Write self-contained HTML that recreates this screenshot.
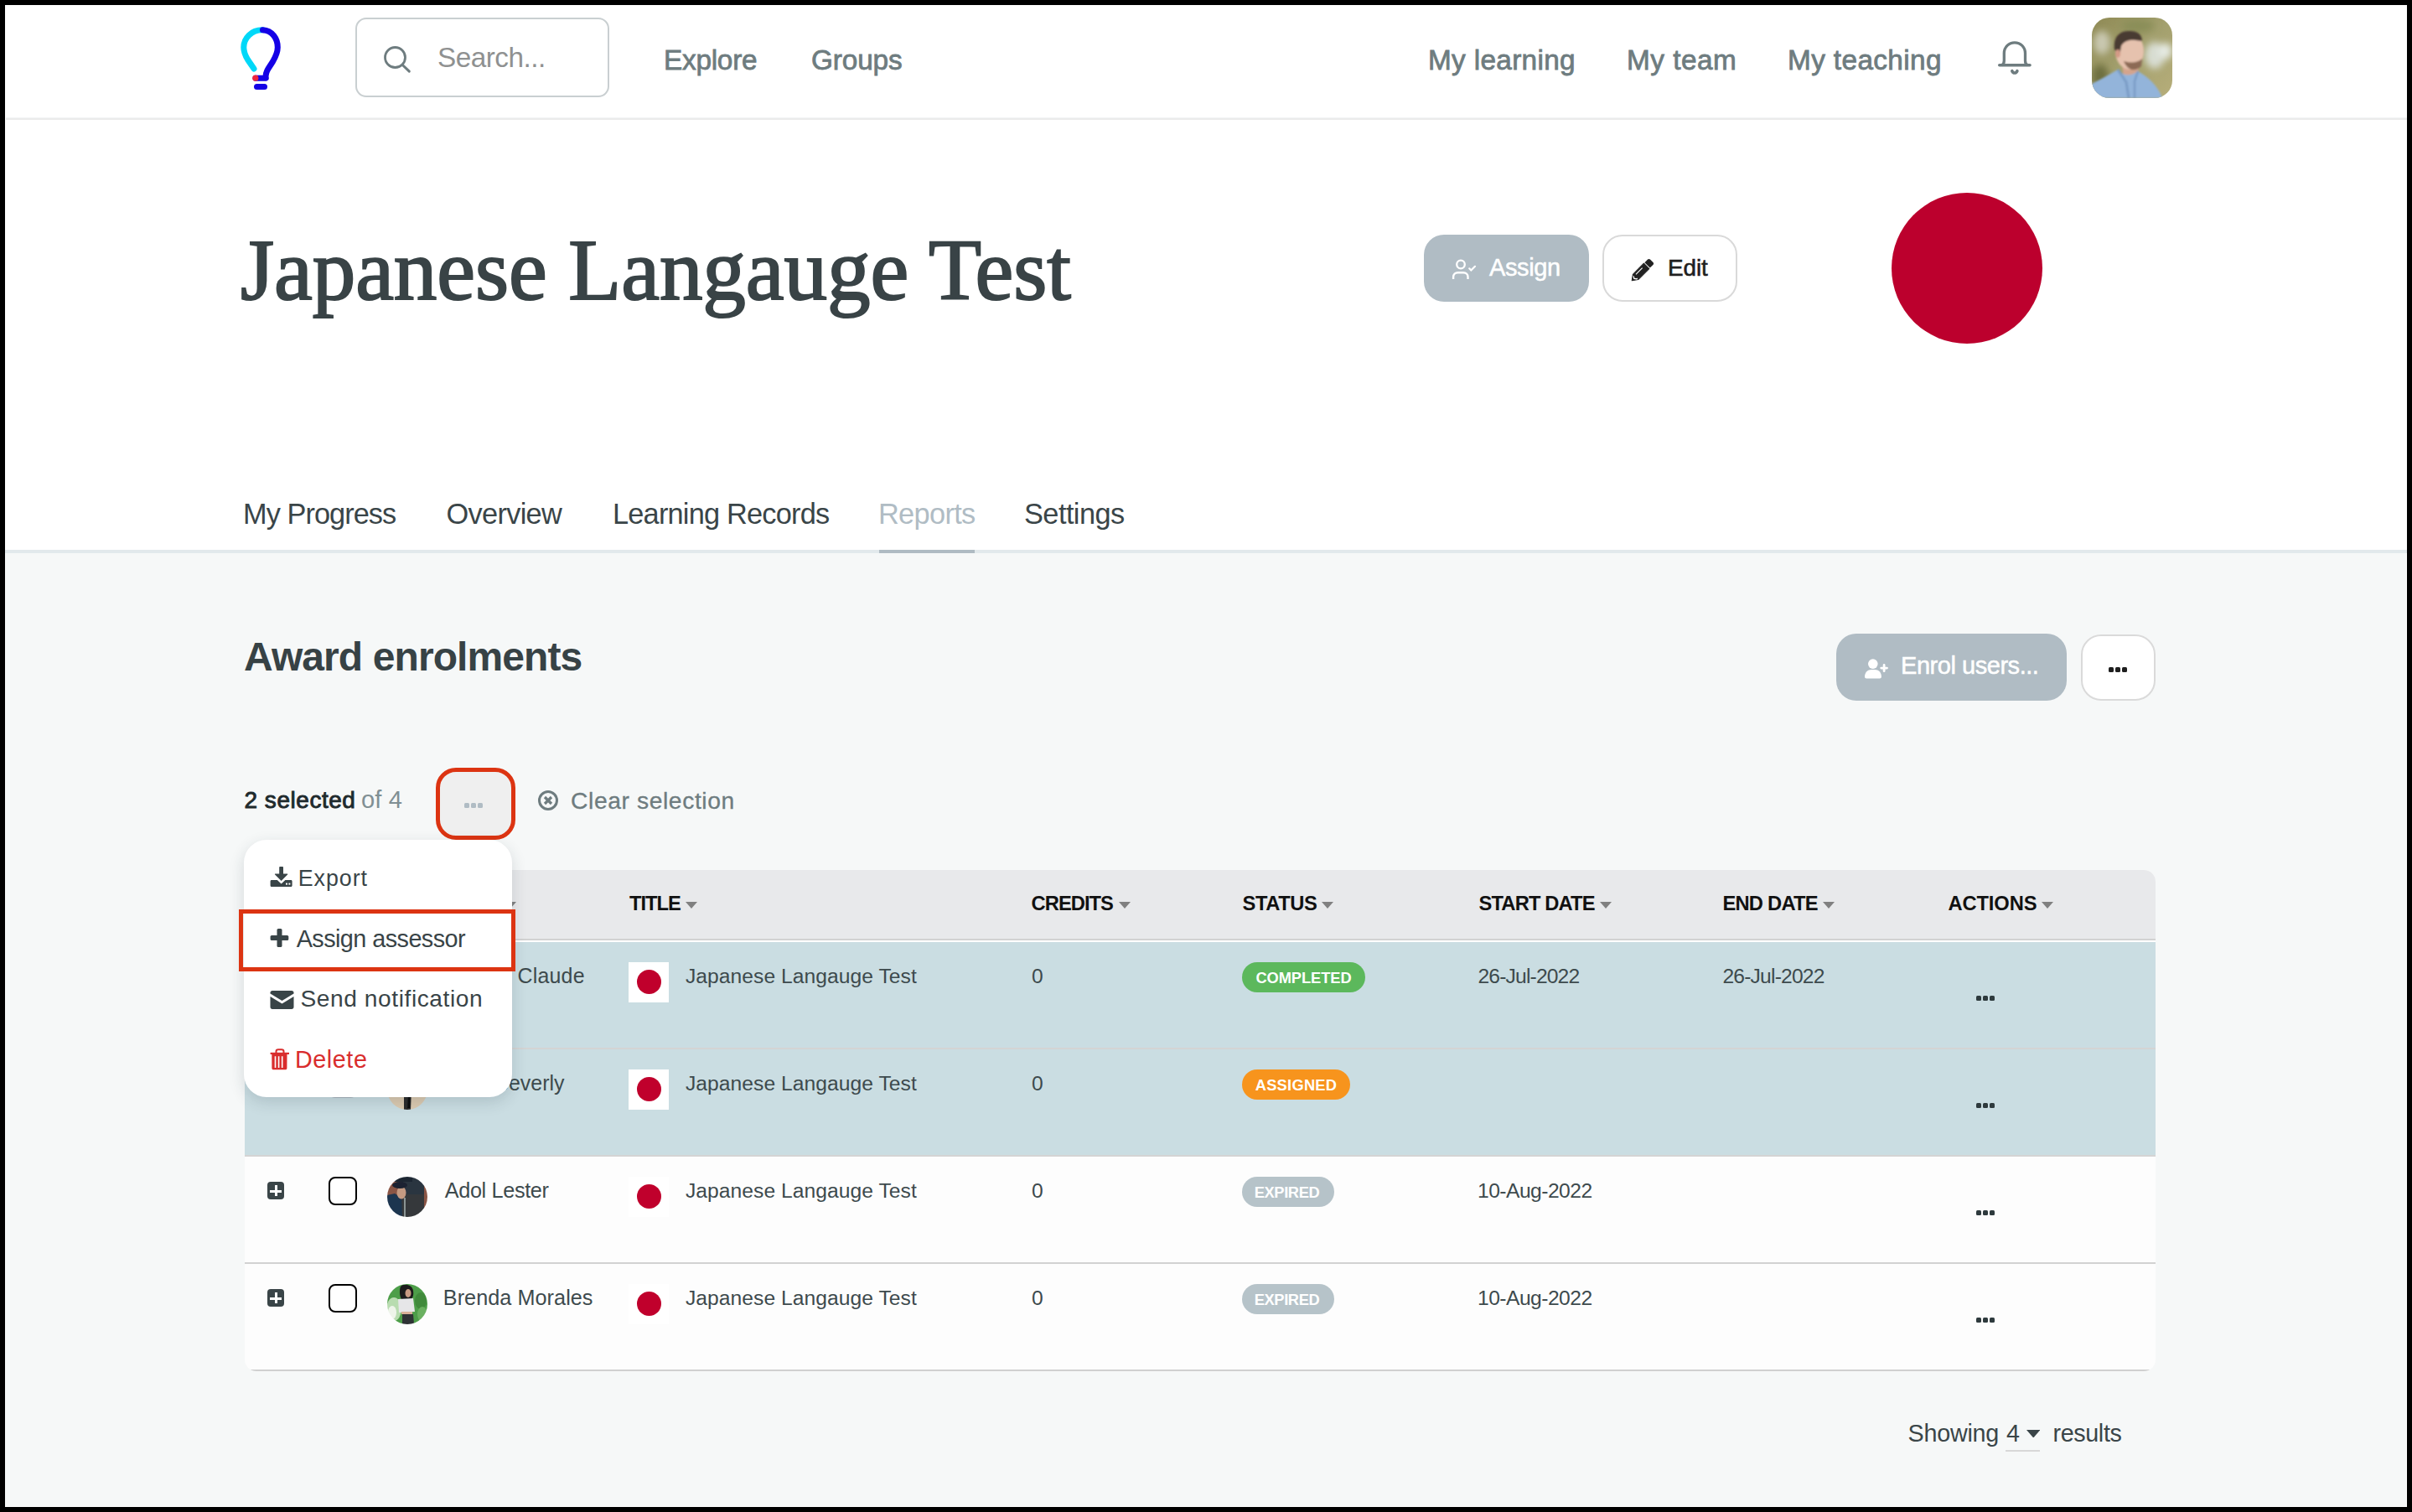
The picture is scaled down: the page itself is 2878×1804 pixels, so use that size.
<!DOCTYPE html>
<html><head><meta charset="utf-8">
<style>
html,body{margin:0;padding:0;}
body{width:2878px;height:1804px;background:#000;position:relative;overflow:hidden;font-family:"Liberation Sans",sans-serif;}
.a{position:absolute;box-sizing:border-box;}
.t{position:absolute;white-space:nowrap;}
</style></head><body>
<!-- frame -->
<div class="a" style="left:6px;top:6px;width:2866px;height:1792px;background:#fff;"></div>
<div class="a" style="left:6px;top:660px;width:2865px;height:1137px;background:#f6f8f8;"></div>
<!-- header line -->
<div class="a" style="left:7px;top:140px;width:2865px;height:1px;background:#f3f4f6;"></div>
<div class="a" style="left:7px;top:141px;width:2865px;height:2px;background:#ebebeb;"></div>

<!-- logo -->
<svg class="a" style="left:275px;top:25px" width="70" height="90" viewBox="0 0 70 90">
 <path d="M38.5 10.8 C25 10.5 15.8 20.5 15.8 31.5 C15.8 37 17.5 41 20.5 46 L28 57" fill="none" stroke="#00d8f8" stroke-width="7" stroke-linecap="round"/>
 <path d="M38.5 10.8 C50 11.5 56.3 21 56.3 31.5 C56.3 38 54 42.5 50.5 48.5 L45 57 C42.5 61 41.6 64 42.3 68.2 L30 68.2" fill="none" stroke="#1400e6" stroke-width="7" stroke-linecap="round" stroke-linejoin="round"/>
 <circle cx="29.8" cy="68.2" r="3.6" fill="#f0243c"/>
 <path d="M31.5 78.6 L40.5 78.6" stroke="#1400e6" stroke-width="7" stroke-linecap="round"/>
</svg>

<!-- search box -->
<div class="a" style="left:424px;top:21px;width:303px;height:95px;border:2px solid #c9cfd1;border-radius:13px;"></div>
<svg class="a" style="left:452px;top:50px" width="44" height="44" viewBox="0 0 44 44">
 <circle cx="19.5" cy="18.5" r="12" fill="none" stroke="#6e7c7f" stroke-width="2.8"/>
 <path d="M28.3 27.5 L36.3 35.2" stroke="#6e7c7f" stroke-width="3" stroke-linecap="round"/>
</svg>

<!-- bell -->
<svg class="a" style="left:2378px;top:44px" width="52" height="50" viewBox="0 0 52 50">
 <path d="M7.8 33.8 L44 33.8" stroke="#6e7c7f" stroke-width="3.6" stroke-linecap="round"/>
 <path d="M10.5 33.8 C12.8 32.6 13.3 31 13.3 28.5 L13.3 19.5 C13.3 12 19 6.8 25.9 6.8 C32.8 6.8 38.5 12 38.5 19.5 L38.5 28.5 C38.5 31 39 32.6 41.3 33.8" fill="none" stroke="#6e7c7f" stroke-width="3.3" stroke-linejoin="round"/>
 <path d="M22.8 40.7 C23.5 42.3 24.6 43 25.85 43 C27.1 43 28.2 42.3 28.9 40.7" fill="none" stroke="#6e7c7f" stroke-width="3.6" stroke-linecap="round"/>
</svg>

<!-- avatar header -->
<svg class="a" style="left:2496px;top:21px" width="96" height="96" viewBox="0 0 96 96">
 <defs><clipPath id="cah"><rect width="96" height="96" rx="21" ry="21"/></clipPath>
 <filter id="fbh"><feGaussianBlur stdDeviation="0.8"/></filter>
 <filter id="fbh2"><feGaussianBlur stdDeviation="4"/></filter>
 <linearGradient id="gbg" x1="0" y1="0" x2="1" y2="1"><stop offset="0" stop-color="#8f8a55"/><stop offset="0.5" stop-color="#a3a06e"/><stop offset="1" stop-color="#b7ae7a"/></linearGradient></defs>
 <g clip-path="url(#cah)">
  <rect width="96" height="96" fill="url(#gbg)"/>
  <g filter="url(#fbh2)">
   <ellipse cx="12" cy="30" rx="10" ry="14" fill="#c9c8b0"/>
   <ellipse cx="75" cy="45" rx="12" ry="16" fill="#d8ddd2"/>
   <ellipse cx="88" cy="40" rx="8" ry="10" fill="#e6ebe4"/>
   <ellipse cx="55" cy="10" rx="20" ry="8" fill="#8a8e58"/>
   <ellipse cx="10" cy="70" rx="10" ry="14" fill="#6e7040"/>
  </g>
  <g filter="url(#fbh)">
   <path d="M36 54 L56 54 L55 70 L38 74 Z" fill="#d4a48c"/>
   <ellipse cx="45" cy="40" rx="17" ry="22" fill="#e6c2ae"/>
   <path d="M27 38 C25 22 34 15 46 16 C54 16 60 20 60 28 L52 27 C45 26 38 28 35 34 L33 46 Z" fill="#4a3a30"/>
   <path d="M38 52 C42 62 50 66 59 58 L60 49 C53 55 45 54 38 52 Z" fill="#8c6a55"/>
   <ellipse cx="31" cy="43" rx="3" ry="5" fill="#d49a86"/>
   <path d="M0 79 C12 73 22 67 31 62 C36 68 44 72 55 64 C67 71 79 81 84 96 L0 96 Z" fill="#93b4da"/>
   <path d="M31 62 L41 77 L44 96" fill="none" stroke="#7a9cc6" stroke-width="3"/>
   <path d="M55 64 L51 76 L51 96" fill="none" stroke="#7a9cc6" stroke-width="2.5"/>
  </g>
 </g>
</svg>

<!-- title-area buttons -->
<div class="a" style="left:1699px;top:280px;width:197px;height:80px;background:#b0bcc4;border-radius:24px;"></div>
<svg class="a" style="left:1730px;top:306px" width="34" height="30" viewBox="0 0 34 30">
 <circle cx="13" cy="9.5" r="4.8" fill="none" stroke="#fff" stroke-width="2.3"/>
 <path d="M4.1 27 L4.1 24.5 C4.1 21.3 6.4 19.3 9.6 19.3 L16 19.3 C19.2 19.3 21.5 21.3 21.5 24.5 L21.5 27" fill="none" stroke="#fff" stroke-width="2.4"/>
 <path d="M23.2 14.3 L25.3 16.6 L30 11.8" fill="none" stroke="#fff" stroke-width="2.2" stroke-linecap="round" stroke-linejoin="round"/>
</svg>
<div class="a" style="left:1912px;top:280px;width:161px;height:80px;background:#fff;border:2px solid #d9d9d9;border-radius:24px;"></div>
<svg class="a" style="left:1944px;top:306px" width="32" height="32" viewBox="0 0 32 32">
 <g transform="translate(3.2 28.8) rotate(-45)">
  <path d="M0 0 L6.2 -4.5 L24.6 -4.5 L24.6 4.5 L6.2 4.5 Z" fill="#222" stroke="#222" stroke-width="1" stroke-linejoin="round"/>
  <path d="M26 -4.5 L31.2 -4.5 C32.4 -4.5 33.2 -3.7 33.2 -2.5 L33.2 2.5 C33.2 3.7 32.4 4.5 31.2 4.5 L26 4.5 Z" fill="#222"/>
  <path d="M8.6 -1.9 L19.5 -1.9" stroke="#fff" stroke-width="1.1"/>
  <path d="M5.2 -2.6 L3.6 0 L5.2 2.6 L6.6 2.6" fill="none" stroke="#fff" stroke-width="1.3" stroke-linejoin="round"/>
 </g>
</svg>
<div class="a" style="left:2257px;top:230px;width:180px;height:180px;border-radius:50%;background:#bc002d;"></div>

<!-- tabs line -->
<div class="a" style="left:6px;top:656px;width:2866px;height:4px;background:#e2e9ec;"></div>
<div class="a" style="left:1049px;top:656px;width:114px;height:4px;background:#afbbc3;"></div>

<!-- enrol buttons -->
<div class="a" style="left:2191px;top:756px;width:275px;height:80px;background:#b0bcc4;border-radius:24px;"></div>
<svg class="a" style="left:2222px;top:784px" width="34" height="30" viewBox="0 0 34 30">
 <circle cx="12.8" cy="8.1" r="5.8" fill="#fff"/>
 <path d="M3 23.5 C3 18.5 6.5 15.1 11 15.1 L15 15.1 C19.5 15.1 22.9 18.5 22.9 23.5 C22.9 24.6 22 25.5 20.9 25.5 L5 25.5 C3.9 25.5 3 24.6 3 23.5 Z" fill="#fff"/>
 <path d="M22.7 13.1 L29.5 13.1 M26.1 9.5 L26.1 16.7" stroke="#fff" stroke-width="2.8" stroke-linecap="round"/>
</svg>
<div class="a" style="left:2483px;top:757px;width:89px;height:79px;background:#fff;border:2px solid #dadada;border-radius:24px;"></div>
<div class="a" style="left:2516px;top:796px;width:6px;height:6px;background:#1e1e1e;border-radius:1.5px;"></div>
<div class="a" style="left:2524px;top:796px;width:6px;height:6px;background:#1e1e1e;border-radius:1.5px;"></div>
<div class="a" style="left:2532px;top:796px;width:6px;height:6px;background:#1e1e1e;border-radius:1.5px;"></div>

<!-- selection bar -->
<div class="a" style="left:520px;top:916px;width:95px;height:86px;background:#efefef;border:5px solid #dc3412;border-radius:24px;"></div>
<div class="a" style="left:554px;top:958px;width:6px;height:6px;background:#b0bcc4;border-radius:1.5px;"></div>
<div class="a" style="left:562px;top:958px;width:6px;height:6px;background:#b0bcc4;border-radius:1.5px;"></div>
<div class="a" style="left:570px;top:958px;width:6px;height:6px;background:#b0bcc4;border-radius:1.5px;"></div>
<svg class="a" style="left:640px;top:941px" width="28" height="28" viewBox="0 0 28 28">
 <circle cx="14" cy="14" r="10.5" fill="none" stroke="#6e7c7f" stroke-width="3"/>
 <path d="M10 10 L18 18 M18 10 L10 18" stroke="#6e7c7f" stroke-width="3.2"/>
</svg>

<!-- TABLE -->
<div class="a" style="left:292px;top:1038px;width:2280px;height:598px;border-radius:14px;overflow:hidden;background:#fdfdfd;">
 <div class="a" style="left:0;top:0;width:2280px;height:82px;background:#e8e9eb;"></div>
 <div class="a" style="left:0;top:82px;width:2280px;height:2px;background:#d2d2d2;"></div>
 <div class="a" style="left:0;top:84px;width:2280px;height:2px;background:#ffffff;"></div>
 <div class="a" style="left:0;top:86px;width:2280px;height:126px;background:#cadde2;"></div>
 <div class="a" style="left:0;top:212px;width:2280px;height:2px;background:#d4d4d4;"></div>
 <div class="a" style="left:0;top:214px;width:2280px;height:126px;background:#cadde2;"></div>
 <div class="a" style="left:0;top:340px;width:2280px;height:2px;background:#d4d4d4;"></div>
 <div class="a" style="left:0;top:468px;width:2280px;height:2px;background:#d2d2d2;"></div>
 <div class="a" style="left:0;top:596px;width:2280px;height:2px;background:#d0d0d0;"></div>
</div>
<!-- sort arrows -->
<svg class="a" style="left:602px;top:1076px" width="14" height="8" viewBox="0 0 14 8"><path d="M0 0 L14 0 L7 8 Z" fill="#808080"/></svg>
<svg class="a" style="left:818px;top:1076px" width="14" height="8" viewBox="0 0 14 8"><path d="M0 0 L14 0 L7 8 Z" fill="#808080"/></svg>
<svg class="a" style="left:1335px;top:1076px" width="14" height="8" viewBox="0 0 14 8"><path d="M0 0 L14 0 L7 8 Z" fill="#808080"/></svg>
<svg class="a" style="left:1577px;top:1076px" width="14" height="8" viewBox="0 0 14 8"><path d="M0 0 L14 0 L7 8 Z" fill="#808080"/></svg>
<svg class="a" style="left:1909px;top:1076px" width="14" height="8" viewBox="0 0 14 8"><path d="M0 0 L14 0 L7 8 Z" fill="#808080"/></svg>
<svg class="a" style="left:2175px;top:1076px" width="14" height="8" viewBox="0 0 14 8"><path d="M0 0 L14 0 L7 8 Z" fill="#808080"/></svg>
<svg class="a" style="left:2436px;top:1076px" width="14" height="8" viewBox="0 0 14 8"><path d="M0 0 L14 0 L7 8 Z" fill="#808080"/></svg>
<!-- row widgets -->
<div class="a" style="left:318.5px;top:1154px;width:20.5px;height:21px;background:#3a4548;border-radius:4px;"></div>
<div class="a" style="left:322px;top:1163.5px;width:14px;height:3px;background:#fff;"></div>
<div class="a" style="left:327.5px;top:1157.8px;width:3px;height:13.6px;background:#fff;"></div>
<div class="a" style="left:392px;top:1148px;width:34px;height:34px;background:#a9b5bd;border-radius:8px;"></div>
<div class="a" style="left:462px;top:1148px;width:48px;height:48px;"><svg width="48" height="48" viewBox="0 0 48 48"><defs><clipPath id="ca0"><circle cx="24" cy="24" r="24"/></clipPath></defs><g clip-path="url(#ca0)"><rect width="48" height="48" fill="#cdb08e"/><rect x="14" y="0" width="20" height="48" fill="#3a3a3a"/></g></svg></div>
<div class="a" style="left:750px;top:1147.5px;width:48px;height:48px;background:#ffffff;"></div>
<div class="a" style="left:759.5px;top:1157px;width:29px;height:29px;border-radius:50%;background:#c0002c;"></div>
<div class="a" style="left:2358px;top:1188px;width:6px;height:6px;background:#2e3a3d;border-radius:1.5px;"></div>
<div class="a" style="left:2366px;top:1188px;width:6px;height:6px;background:#2e3a3d;border-radius:1.5px;"></div>
<div class="a" style="left:2374px;top:1188px;width:6px;height:6px;background:#2e3a3d;border-radius:1.5px;"></div>
<div class="a" style="left:1482px;top:1148px;width:147px;height:36px;background:#5cb85c;border-radius:18px;"></div>
<div class="a" style="left:318.5px;top:1282px;width:20.5px;height:21px;background:#3a4548;border-radius:4px;"></div>
<div class="a" style="left:322px;top:1291.5px;width:14px;height:3px;background:#fff;"></div>
<div class="a" style="left:327.5px;top:1285.8px;width:3px;height:13.6px;background:#fff;"></div>
<div class="a" style="left:392px;top:1276px;width:34px;height:34px;background:#a9b5bd;border-radius:8px;"></div>
<div class="a" style="left:462px;top:1276px;width:48px;height:48px;"><svg width="48" height="48" viewBox="0 0 48 48"><defs><clipPath id="ca1"><circle cx="24" cy="24" r="24"/></clipPath><filter id="fb1"><feGaussianBlur stdDeviation="0.6"/></filter></defs><g clip-path="url(#ca1)" filter="url(#fb1)"><rect width="48" height="48" fill="#dccab0"/><rect x="0" y="0" width="48" height="20" fill="#d8c4a6"/><path d="M20 0 L30 0 L28 48 L20 48 Z" fill="#2a2a2c"/><path d="M25 30 L28 30 L27 46 L24 46 Z" fill="#111"/></g></svg></div>
<div class="a" style="left:750px;top:1275.5px;width:48px;height:48px;background:#ffffff;"></div>
<div class="a" style="left:759.5px;top:1285px;width:29px;height:29px;border-radius:50%;background:#c0002c;"></div>
<div class="a" style="left:2358px;top:1316px;width:6px;height:6px;background:#2e3a3d;border-radius:1.5px;"></div>
<div class="a" style="left:2366px;top:1316px;width:6px;height:6px;background:#2e3a3d;border-radius:1.5px;"></div>
<div class="a" style="left:2374px;top:1316px;width:6px;height:6px;background:#2e3a3d;border-radius:1.5px;"></div>
<div class="a" style="left:1482px;top:1276px;width:129px;height:36px;background:#f7941d;border-radius:18px;"></div>
<div class="a" style="left:318.5px;top:1410px;width:20.5px;height:21px;background:#3a4548;border-radius:4px;"></div>
<div class="a" style="left:322px;top:1419.5px;width:14px;height:3px;background:#fff;"></div>
<div class="a" style="left:327.5px;top:1413.8px;width:3px;height:13.6px;background:#fff;"></div>
<div class="a" style="left:392px;top:1404px;width:34px;height:34px;background:#fff;border:2.2px solid #000;border-radius:8px;"></div>
<div class="a" style="left:462px;top:1404px;width:48px;height:48px;"><svg width="48" height="48" viewBox="0 0 48 48"><defs><clipPath id="ca2"><circle cx="24" cy="24" r="24"/></clipPath><filter id="fb2"><feGaussianBlur stdDeviation="0.5"/></filter></defs><g clip-path="url(#ca2)" filter="url(#fb2)"><rect width="48" height="48" fill="#8a5544"/><rect x="17" y="0" width="27" height="48" fill="#34373b"/><rect x="17" y="0" width="27" height="21" fill="#2c3440"/><rect x="8" y="0" width="22" height="6" fill="#1e2630"/><path d="M0 22 L9 20 L17 25 L18 48 L0 48 Z" fill="#1f3550"/><ellipse cx="17" cy="19" rx="5.5" ry="7.5" fill="#c49a82"/><ellipse cx="15" cy="10" rx="9" ry="4" fill="#1a2230"/><rect x="20" y="25" width="2" height="23" fill="#8a9494"/></g></svg></div>
<div class="a" style="left:750px;top:1403.5px;width:48px;height:48px;background:#ffffff;"></div>
<div class="a" style="left:759.5px;top:1413px;width:29px;height:29px;border-radius:50%;background:#c0002c;"></div>
<div class="a" style="left:2358px;top:1444px;width:6px;height:6px;background:#2e3a3d;border-radius:1.5px;"></div>
<div class="a" style="left:2366px;top:1444px;width:6px;height:6px;background:#2e3a3d;border-radius:1.5px;"></div>
<div class="a" style="left:2374px;top:1444px;width:6px;height:6px;background:#2e3a3d;border-radius:1.5px;"></div>
<div class="a" style="left:1482px;top:1404px;width:110px;height:36px;background:#b6c3c9;border-radius:18px;"></div>
<div class="a" style="left:318.5px;top:1538px;width:20.5px;height:21px;background:#3a4548;border-radius:4px;"></div>
<div class="a" style="left:322px;top:1547.5px;width:14px;height:3px;background:#fff;"></div>
<div class="a" style="left:327.5px;top:1541.8px;width:3px;height:13.6px;background:#fff;"></div>
<div class="a" style="left:392px;top:1532px;width:34px;height:34px;background:#fff;border:2.2px solid #000;border-radius:8px;"></div>
<div class="a" style="left:462px;top:1532px;width:48px;height:48px;"><svg width="48" height="48" viewBox="0 0 48 48"><defs><clipPath id="ca3"><circle cx="24" cy="24" r="24"/></clipPath><filter id="fb3"><feGaussianBlur stdDeviation="0.7"/></filter></defs><g clip-path="url(#ca3)" filter="url(#fb3)"><rect width="48" height="48" fill="#4e9e48"/><ellipse cx="8" cy="30" rx="9" ry="14" fill="#b8dcb0"/><ellipse cx="6" cy="34" rx="5" ry="8" fill="#eef4ea"/><ellipse cx="40" cy="20" rx="7" ry="10" fill="#3f8a3a"/><ellipse cx="42" cy="36" rx="6" ry="9" fill="#6ab060"/><path d="M16 3 C19 -1 30 0 31 8 C32 14 30 18 26 20 L18 20 C15 16 14 8 16 3 Z" fill="#1c1a1a"/><ellipse cx="25" cy="11" rx="3.5" ry="5" fill="#c89a82"/><path d="M13 18 L31 17 L33 33 L14 34 Z" fill="#e6e6e8"/><rect x="17" y="33" width="13" height="3" fill="#d8b098"/><path d="M18 36 L31 36 L32 48 L18 48 Z" fill="#2e3034"/></g></svg></div>
<div class="a" style="left:750px;top:1531.5px;width:48px;height:48px;background:#ffffff;"></div>
<div class="a" style="left:759.5px;top:1541px;width:29px;height:29px;border-radius:50%;background:#c0002c;"></div>
<div class="a" style="left:2358px;top:1572px;width:6px;height:6px;background:#2e3a3d;border-radius:1.5px;"></div>
<div class="a" style="left:2366px;top:1572px;width:6px;height:6px;background:#2e3a3d;border-radius:1.5px;"></div>
<div class="a" style="left:2374px;top:1572px;width:6px;height:6px;background:#2e3a3d;border-radius:1.5px;"></div>
<div class="a" style="left:1482px;top:1532px;width:110px;height:36px;background:#b6c3c9;border-radius:18px;"></div>
<svg class="a" style="left:2417.5px;top:1705.5px" width="16.5" height="9.5" viewBox="0 0 16.5 9.5"><path d="M0 0 L16.5 0 L8.25 9.5 Z" fill="#3a4548"/></svg>
<div class="a" style="left:2393px;top:1730px;width:41px;height:2px;background:#d8d8d8;"></div>

<div class="t" style="left:522.00px;top:52.28px;font:400 33.33px/33.33px 'Liberation Sans';color:#8f9191;letter-spacing:-0.51px;">Search...</div>
<div class="t" style="left:792.00px;top:55.28px;font:400 33.33px/33.33px 'Liberation Sans';color:#6e7c7f;letter-spacing:-0.24px;-webkit-text-stroke:0.8px #6e7c7f;">Explore</div>
<div class="t" style="left:968.00px;top:55.28px;font:400 33.33px/33.33px 'Liberation Sans';color:#6e7c7f;letter-spacing:-0.13px;-webkit-text-stroke:0.8px #6e7c7f;">Groups</div>
<div class="t" style="left:1704.00px;top:55.28px;font:400 33.33px/33.33px 'Liberation Sans';color:#6e7c7f;letter-spacing:0.33px;-webkit-text-stroke:0.8px #6e7c7f;">My learning</div>
<div class="t" style="left:1941.00px;top:55.28px;font:400 33.33px/33.33px 'Liberation Sans';color:#6e7c7f;letter-spacing:0.50px;-webkit-text-stroke:0.8px #6e7c7f;">My team</div>
<div class="t" style="left:2133.00px;top:55.28px;font:400 33.33px/33.33px 'Liberation Sans';color:#6e7c7f;letter-spacing:0.38px;-webkit-text-stroke:0.8px #6e7c7f;">My teaching</div>
<div class="t" style="left:287.00px;top:271.17px;font:400 103.08px/103.08px 'Liberation Serif';color:#394346;letter-spacing:-0.08px;-webkit-text-stroke:2px #394346;">Japanese Langauge Test</div>
<div class="t" style="left:1777.00px;top:304.96px;font:400 28.99px/28.99px 'Liberation Sans';color:#ffffff;letter-spacing:-0.37px;-webkit-text-stroke:0.5px #fff;">Assign</div>
<div class="t" style="left:1990.00px;top:305.75px;font:400 27.83px/27.83px 'Liberation Sans';color:#1f1f1f;letter-spacing:-0.07px;-webkit-text-stroke:0.6px #1f1f1f;">Edit</div>
<div class="t" style="left:290.00px;top:596.12px;font:400 34.35px/34.35px 'Liberation Sans';color:#3a4548;letter-spacing:-0.95px;">My Progress</div>
<div class="t" style="left:532.60px;top:596.12px;font:400 34.35px/34.35px 'Liberation Sans';color:#3a4548;letter-spacing:-0.70px;">Overview</div>
<div class="t" style="left:731.00px;top:596.12px;font:400 34.35px/34.35px 'Liberation Sans';color:#3a4548;letter-spacing:-0.79px;">Learning Records</div>
<div class="t" style="left:1048.00px;top:596.12px;font:400 34.35px/34.35px 'Liberation Sans';color:#b0bcc4;letter-spacing:-0.67px;">Reports</div>
<div class="t" style="left:1222.00px;top:596.12px;font:400 34.35px/34.35px 'Liberation Sans';color:#3a4548;letter-spacing:-0.55px;">Settings</div>
<div class="t" style="left:291.00px;top:760.47px;font:700 48.00px/48.00px 'Liberation Sans';color:#374245;letter-spacing:-0.91px;">Award enrolments</div>
<div class="t" style="left:2268.00px;top:779.96px;font:400 28.99px/28.99px 'Liberation Sans';color:#ffffff;letter-spacing:-0.45px;-webkit-text-stroke:0.5px #fff;">Enrol users...</div>
<div class="t" style="left:291.40px;top:940.92px;font:400 27.97px/27.97px 'Liberation Sans';color:#1e2a2d;letter-spacing:0.56px;-webkit-text-stroke:0.9px #1e2a2d;">2 selected</div>
<div class="t" style="left:431.00px;top:940.34px;font:400 29.13px/29.13px 'Liberation Sans';color:#808f94;letter-spacing:0.11px;">of 4</div>
<div class="t" style="left:681.00px;top:941.08px;font:400 28.26px/28.26px 'Liberation Sans';color:#6e7c7f;letter-spacing:0.60px;-webkit-text-stroke:0.3px #6e7c7f;">Clear selection</div>
<div class="t" style="left:751.00px;top:1067.43px;font:700 23.71px/23.71px 'Liberation Sans';color:#111111;letter-spacing:-1.01px;">TITLE</div>
<div class="t" style="left:1230.60px;top:1067.43px;font:700 23.71px/23.71px 'Liberation Sans';color:#111111;letter-spacing:-0.97px;">CREDITS</div>
<div class="t" style="left:1482.50px;top:1067.43px;font:700 23.71px/23.71px 'Liberation Sans';color:#111111;letter-spacing:-0.40px;">STATUS</div>
<div class="t" style="left:1764.50px;top:1067.43px;font:700 23.71px/23.71px 'Liberation Sans';color:#111111;letter-spacing:-0.84px;">START DATE</div>
<div class="t" style="left:2055.40px;top:1067.43px;font:700 23.71px/23.71px 'Liberation Sans';color:#111111;letter-spacing:-0.74px;">END DATE</div>
<div class="t" style="left:2324.40px;top:1067.43px;font:700 23.71px/23.71px 'Liberation Sans';color:#111111;letter-spacing:-0.08px;">ACTIONS</div>
<div class="t" style="left:617.50px;top:1152.40px;font:400 24.93px/24.93px 'Liberation Sans';color:#3d4a4d;letter-spacing:0.21px;">Claude</div>
<div class="t" style="left:590.40px;top:1280.40px;font:400 24.93px/24.93px 'Liberation Sans';color:#3d4a4d;">Beverly</div>
<div class="t" style="left:530.80px;top:1408.25px;font:400 25.22px/25.22px 'Liberation Sans';color:#3d4a4d;letter-spacing:-0.35px;">Adol Lester</div>
<div class="t" style="left:528.80px;top:1536.25px;font:400 25.22px/25.22px 'Liberation Sans';color:#3d4a4d;letter-spacing:0.05px;">Brenda Morales</div>
<div class="t" style="left:818.00px;top:1152.64px;font:400 24.64px/24.64px 'Liberation Sans';color:#3d4a4d;letter-spacing:0.05px;">Japanese Langauge Test</div>
<div class="t" style="left:1231.00px;top:1152.64px;font:400 24.64px/24.64px 'Liberation Sans';color:#3d4a4d;">0</div>
<div class="t" style="left:818.00px;top:1280.64px;font:400 24.64px/24.64px 'Liberation Sans';color:#3d4a4d;letter-spacing:0.05px;">Japanese Langauge Test</div>
<div class="t" style="left:1231.00px;top:1280.64px;font:400 24.64px/24.64px 'Liberation Sans';color:#3d4a4d;">0</div>
<div class="t" style="left:818.00px;top:1408.64px;font:400 24.64px/24.64px 'Liberation Sans';color:#3d4a4d;letter-spacing:0.05px;">Japanese Langauge Test</div>
<div class="t" style="left:1231.00px;top:1408.64px;font:400 24.64px/24.64px 'Liberation Sans';color:#3d4a4d;">0</div>
<div class="t" style="left:818.00px;top:1536.64px;font:400 24.64px/24.64px 'Liberation Sans';color:#3d4a4d;letter-spacing:0.05px;">Japanese Langauge Test</div>
<div class="t" style="left:1231.00px;top:1536.64px;font:400 24.64px/24.64px 'Liberation Sans';color:#3d4a4d;">0</div>
<div class="t" style="left:1763.50px;top:1152.64px;font:400 24.64px/24.64px 'Liberation Sans';color:#3d4a4d;letter-spacing:-0.84px;">26-Jul-2022</div>
<div class="t" style="left:2055.40px;top:1152.64px;font:400 24.64px/24.64px 'Liberation Sans';color:#3d4a4d;letter-spacing:-0.80px;">26-Jul-2022</div>
<div class="t" style="left:1763.00px;top:1408.64px;font:400 24.64px/24.64px 'Liberation Sans';color:#3d4a4d;letter-spacing:-0.53px;">10-Aug-2022</div>
<div class="t" style="left:1763.00px;top:1536.64px;font:400 24.64px/24.64px 'Liberation Sans';color:#3d4a4d;letter-spacing:-0.53px;">10-Aug-2022</div>
<div class="t" style="left:1498.40px;top:1158.42px;font:700 18.29px/18.29px 'Liberation Sans';color:#ffffff;letter-spacing:-0.07px;">COMPLETED</div>
<div class="t" style="left:1497.70px;top:1286.42px;font:700 18.29px/18.29px 'Liberation Sans';color:#ffffff;letter-spacing:0.26px;">ASSIGNED</div>
<div class="t" style="left:1496.70px;top:1414.42px;font:700 18.29px/18.29px 'Liberation Sans';color:#ffffff;letter-spacing:-0.38px;">EXPIRED</div>
<div class="t" style="left:1496.70px;top:1542.42px;font:700 18.29px/18.29px 'Liberation Sans';color:#ffffff;letter-spacing:-0.38px;">EXPIRED</div>
<div class="t" style="left:2276.60px;top:1696.01px;font:400 28.70px/28.70px 'Liberation Sans';color:#3a4548;letter-spacing:-0.23px;">Showing</div>
<div class="t" style="left:2394.00px;top:1696.01px;font:400 28.70px/28.70px 'Liberation Sans';color:#3a4548;">4</div>
<div class="t" style="left:2449.50px;top:1696.01px;font:400 28.70px/28.70px 'Liberation Sans';color:#3a4548;letter-spacing:-0.36px;">results</div>

<!-- menu -->
<div class="a" style="left:291px;top:1002px;width:320px;height:307px;background:#fff;border-radius:27px;box-shadow:0 6px 18px rgba(30,50,60,0.16);"></div>
<div class="a" style="left:285px;top:1085px;width:330px;height:74px;border:5px solid #dc3412;"></div>
<svg class="a" style="left:320px;top:1031px" width="32" height="30" viewBox="0 0 32 30">
 <path d="M13.2 3.8 C13.2 3.3 13.6 3 14 3 L17.2 3 C17.6 3 18 3.3 18 3.8 L18 11.6 L22.6 11.6 C23.2 11.6 23.5 12.2 23.1 12.6 L15.6 20 L8.1 12.6 C7.7 12.2 8 11.6 8.6 11.6 L13.2 11.6 Z" fill="#394447"/>
 <path d="M2.6 20.5 C2.6 19.7 3.2 19 4 19 L10.8 19 L15.6 23.6 L20.4 19 L27.2 19 C28 19 28.6 19.7 28.6 20.5 L28.6 25.5 C28.6 26.3 28 27 27.2 27 L4 27 C3.2 27 2.6 26.3 2.6 25.5 Z" fill="#394447"/>
 <rect x="21" y="22.6" width="2" height="2" fill="#fff"/><rect x="24.4" y="22.6" width="2" height="2" fill="#fff"/>
</svg>
<svg class="a" style="left:320px;top:1105px" width="28" height="28" viewBox="0 0 28 28">
 <rect x="2.6" y="11" width="21.7" height="6" rx="1.6" fill="#394447"/>
 <rect x="10.5" y="3" width="6" height="22" rx="1.6" fill="#394447"/>
</svg>
<svg class="a" style="left:320px;top:1180px" width="34" height="28" viewBox="0 0 34 28">
 <path d="M2.5 4.5 C2.5 3 3.5 2 5 2 L28 2 C29.5 2 30.5 3 30.5 4.5 L30.5 5.5 L16.5 14 L2.5 5.5 Z" fill="#394447"/>
 <path d="M2.5 9 L16.5 17.5 L30.5 9 L30.5 21.5 C30.5 23 29.5 24 28 24 L5 24 C3.5 24 2.5 23 2.5 21.5 Z" fill="#394447"/>
</svg>
<svg class="a" style="left:320px;top:1250px" width="28" height="30" viewBox="0 0 28 30">
 <path d="M9.5 6 L9.5 4.5 C9.5 3 10.8 2.3 12 2.3 L16 2.3 C17.2 2.3 18.5 3 18.5 4.5 L18.5 6" fill="none" stroke="#d92d2d" stroke-width="2"/>
 <rect x="2.6" y="5.8" width="22.4" height="2.2" fill="#d92d2d"/>
 <path d="M4.3 8 L22.5 8 L22.4 24.4 C22.4 25.5 21.6 26.2 20.5 26.2 L6.3 26.2 C5.2 26.2 4.4 25.5 4.4 24.4 Z" fill="#d92d2d"/>
 <path d="M8.5 10.3 L8.5 24 M12.6 10.3 L12.6 24 M16.7 10.3 L16.7 24" stroke="#fff" stroke-width="1.6"/>
</svg>
<div class="t" style="left:355.70px;top:1035.30px;font:400 26.81px/26.81px 'Liberation Sans';color:#394447;letter-spacing:0.98px;">Export</div>
<div class="t" style="left:353.70px;top:1105.99px;font:400 28.84px/28.84px 'Liberation Sans';color:#394447;letter-spacing:-0.57px;">Assign assessor</div>
<div class="t" style="left:358.50px;top:1178.10px;font:400 28.12px/28.12px 'Liberation Sans';color:#394447;letter-spacing:0.58px;">Send notification</div>
<div class="t" style="left:352.00px;top:1250.01px;font:400 28.70px/28.70px 'Liberation Sans';color:#d92d2d;letter-spacing:0.59px;">Delete</div>
</body></html>
